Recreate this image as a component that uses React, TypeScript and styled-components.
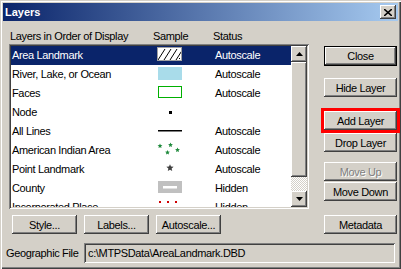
import React from "react";
import styled, { createGlobalStyle, css } from "styled-components";

const GlobalStyle = createGlobalStyle`
  html, body {
    margin: 0;
    padding: 0;
    background: #d4d0c8;
  }
  body {
    font-family: "Liberation Sans", Arial, sans-serif;
    font-size: 11px;
    letter-spacing: -0.35px;
    color: #000;
  }
`;

const raised = css`
  box-shadow: inset -1px -1px #404040, inset 1px 1px #ffffff,
    inset -2px -2px #808080, inset 2px 2px #d4d0c8;
`;

const sunken = css`
  box-shadow: inset 1px 1px #808080, inset -1px -1px #ffffff,
    inset 2px 2px #404040, inset -2px -2px #d4d0c8;
`;

const Window = styled.div`
  width: 401px;
  height: 269px;
  box-sizing: border-box;
  padding: 3px;
  background: #d4d0c8;
  display: flex;
  flex-direction: column;
  box-shadow: inset 1px 1px #d4d0c8, inset 2px 2px #ffffff,
    inset -1px -1px #404040, inset -2px -2px #808080;
`;

const TitleBar = styled.div`
  height: 18px;
  flex-shrink: 0;
  display: flex;
  align-items: center;
  justify-content: space-between;
  padding: 0 2px;
  background: linear-gradient(to right, #0a246a, #a6caf0);
  color: #fff;
  font-weight: bold;
  letter-spacing: 0;
`;

const CloseBox = styled.div`
  width: 16px;
  height: 14px;
  box-sizing: border-box;
  background: #d4d0c8;
  display: flex;
  align-items: center;
  justify-content: center;
  ${raised}
`;

const Main = styled.div`
  display: flex;
  padding-left: 6px;
`;

const LeftCol = styled.div`
  width: 300px;
  display: flex;
  flex-direction: column;
`;

const HeaderRow = styled.div`
  display: grid;
  grid-template-columns: 143px 60px 1fr;
  padding: 8px 0 0 1px;
  line-height: 15px;
  white-space: nowrap;
`;

const ListBox = styled.div`
  height: 165px;
  box-sizing: border-box;
  padding: 2px;
  background: #fff;
  display: flex;
  ${sunken}
`;

const Rows = styled.div`
  flex: 1;
  overflow: hidden;
  display: flex;
  flex-direction: column;
`;

const Row = styled.div<{ $selected?: boolean }>`
  flex-shrink: 0;
  height: 19px;
  line-height: 19px;
  display: grid;
  grid-template-columns: 145px 58px 1fr;
  padding-left: 1px;
  white-space: nowrap;
  background: ${(p) => (p.$selected ? "#0a246a" : "transparent")};
  color: ${(p) => (p.$selected ? "#fff" : "#000")};
`;

const Swatch = styled.svg`
  display: block;
`;

const ScrollBar = styled.div`
  width: 16px;
  display: flex;
  flex-direction: column;
`;

const ScrollButton = styled.div`
  height: 16px;
  flex-shrink: 0;
  background: #d4d0c8;
  display: flex;
  align-items: center;
  justify-content: center;
  ${raised}
`;

const Thumb = styled.div`
  height: 115px;
  flex-shrink: 0;
  background: #d4d0c8;
  ${raised}
`;

const Track = styled.div`
  flex: 1;
  background: repeating-conic-gradient(#ffffff 0 25%, #d4d0c8 0 50%) 0 0 / 2px 2px;
`;

const ButtonRow = styled.div`
  display: flex;
  gap: 7px;
  padding-left: 3px;
  margin-top: 6px;
`;

const Button = styled.button<{ $width?: number; $default?: boolean }>`
  width: ${(p) => p.$width ?? 73}px;
  height: ${(p) => (p.$default ? 20 : 19)}px;
  box-sizing: border-box;
  padding: 0;
  border: none;
  background: #d4d0c8;
  font: inherit;
  letter-spacing: inherit;
  color: #000;
  flex-shrink: 0;
  ${(p) =>
    p.$default
      ? css`
          box-shadow: inset 0 0 0 1px #000, inset -2px -2px #404040,
            inset 2px 2px #ffffff, inset -3px -3px #808080;
        `
      : raised}
  &:disabled {
    color: #808080;
    text-shadow: 1px 1px #ffffff;
  }
`;

const RightCol = styled.div`
  width: 73px;
  margin-left: 15px;
  padding-top: 25px;
  display: flex;
  flex-direction: column;
`;

const Gap = styled.div<{ $h: number }>`
  height: ${(p) => p.$h}px;
  flex-shrink: 0;
`;

const Highlight = styled.div`
  border: 3px solid #ff0000;
  margin: 0 -3px;
  display: flex;
`;

const FileRow = styled.div`
  display: flex;
  align-items: center;
  margin-top: 9px;
  padding-left: 3px;
`;

const FileLabel = styled.div`
  width: 78px;
  white-space: nowrap;
`;

const FileField = styled.div`
  width: 311px;
  height: 20px;
  box-sizing: border-box;
  padding-left: 4px;
  line-height: 20px;
  white-space: nowrap;
  ${sunken}
`;

type Kind =
  | "hatch"
  | "water"
  | "outline"
  | "node"
  | "line"
  | "greenStars"
  | "star"
  | "county"
  | "dots";

const starPath = (cx: number, cy: number, r: number) => {
  const pts: string[] = [];
  for (let i = 0; i < 10; i++) {
    const rad = i % 2 === 0 ? r : r * 0.45;
    const a = (Math.PI / 5) * i - Math.PI / 2;
    pts.push(`${(cx + rad * Math.cos(a)).toFixed(2)},${(cy + rad * Math.sin(a)).toFixed(2)}`);
  }
  return "M" + pts.join("L") + "Z";
};

const SampleIcon = ({ kind }: { kind: Kind }) => (
  <Swatch width="25" height="19" viewBox="0 0 25 19">
    {kind === "hatch" && (
      <g>
        <rect x="0.5" y="1.5" width="24" height="13" fill="#fff" stroke="#a0a0a0" />
        <clipPath id="hatchClip">
          <rect x="1" y="2" width="23" height="12" />
        </clipPath>
        <g clipPath="url(#hatchClip)" stroke="#000" strokeWidth="1">
          <line x1="1" y1="14" x2="8" y2="3" />
          <line x1="7" y1="14" x2="14" y2="3" />
          <line x1="13" y1="14" x2="20" y2="3" />
          <line x1="19" y1="14" x2="26" y2="3" />
        </g>
        <rect x="22" y="12" width="1" height="1" fill="#000" />
      </g>
    )}
    {kind === "water" && <rect x="1" y="2" width="24" height="13" fill="#a9dcea" />}
    {kind === "outline" && (
      <rect x="1.5" y="2.5" width="23" height="11" fill="#fff" stroke="#00b000" />
    )}
    {kind === "node" && <rect x="12" y="8" width="3" height="3" fill="#000" />}
    {kind === "line" && <rect x="1" y="8" width="24" height="1.5" fill="#000" />}
    {kind === "greenStars" && (
      <g fill="#1f8a3c">
        <path d={starPath(3, 5, 2.6)} />
        <path d={starPath(13.5, 4, 2.6)} />
        <path d={starPath(10.5, 11.5, 2.6)} />
        <path d={starPath(20.5, 9, 2.6)} />
      </g>
    )}
    {kind === "star" && <path d={starPath(13, 8, 3.8)} fill="#404040" />}
    {kind === "county" && (
      <g>
        <rect x="1" y="2" width="24" height="12" fill="#c0c0c0" />
        <rect x="6" y="7" width="14" height="2.5" fill="#fff" />
      </g>
    )}
    {kind === "dots" && (
      <g fill="#d00000">
        <rect x="2" y="3" width="2" height="2" />
        <rect x="10" y="3" width="2" height="2" />
        <rect x="18" y="3" width="2" height="2" />
        <rect x="2" y="9" width="2" height="2" />
        <rect x="9" y="9" width="2" height="2" />
        <rect x="16" y="9" width="2" height="2" />
        <rect x="23" y="9" width="2" height="2" />
      </g>
    )}
  </Swatch>
);

const layers: { name: string; kind: Kind; status: string }[] = [
  { name: "Area Landmark", kind: "hatch", status: "Autoscale" },
  { name: "River, Lake, or Ocean", kind: "water", status: "Autoscale" },
  { name: "Faces", kind: "outline", status: "Autoscale" },
  { name: "Node", kind: "node", status: "" },
  { name: "All Lines", kind: "line", status: "Autoscale" },
  { name: "American Indian Area", kind: "greenStars", status: "Autoscale" },
  { name: "Point Landmark", kind: "star", status: "Autoscale" },
  { name: "County", kind: "county", status: "Hidden" },
  { name: "Incorporated Place", kind: "dots", status: "Hidden" },
];

const Arrow = ({ up }: { up?: boolean }) => (
  <svg width="7" height="4" viewBox="0 0 7 4">
    <path d={up ? "M3.5 0L7 4H0Z" : "M0 0H7L3.5 4Z"} fill="#000" />
  </svg>
);

const App = (): JSX.Element => {
  return (
    <React.Fragment>
      <GlobalStyle />
      <Window>
        <TitleBar>
          <span>Layers</span>
          <CloseBox>
            <svg width="8" height="7" viewBox="0 0 8 7">
              <path d="M0 0L8 7M8 0L0 7" stroke="#000" strokeWidth="1.6" />
            </svg>
          </CloseBox>
        </TitleBar>
        <Main>
          <LeftCol>
            <HeaderRow>
              <span>Layers in Order of Display</span>
              <span>Sample</span>
              <span>Status</span>
            </HeaderRow>
            <ListBox>
              <Rows>
                {layers.map((layer, i) => (
                  <Row key={layer.name} $selected={i === 0}>
                    <span>{layer.name}</span>
                    <SampleIcon kind={layer.kind} />
                    <span>{layer.status}</span>
                  </Row>
                ))}
              </Rows>
              <ScrollBar>
                <ScrollButton>
                  <Arrow up />
                </ScrollButton>
                <Thumb />
                <Track />
                <ScrollButton>
                  <Arrow />
                </ScrollButton>
              </ScrollBar>
            </ListBox>
            <ButtonRow>
              <Button $width={65}>Style...</Button>
              <Button $width={65}>Labels...</Button>
              <Button $width={65}>Autoscale...</Button>
            </ButtonRow>
          </LeftCol>
          <RightCol>
            <Button $default>Close</Button>
            <Gap $h={12} />
            <Button>Hide Layer</Button>
            <Gap $h={11} />
            <Highlight>
              <Button>Add Layer</Button>
            </Highlight>
            <Button>Drop Layer</Button>
            <Gap $h={10} />
            <Button disabled>Move Up</Button>
            <Gap $h={1} />
            <Button>Move Down</Button>
            <Gap $h={14} />
            <Button>Metadata</Button>
          </RightCol>
        </Main>
        <FileRow>
          <FileLabel>Geographic File</FileLabel>
          <FileField>c:\MTPSData\AreaLandmark.DBD</FileField>
        </FileRow>
      </Window>
    </React.Fragment>
  );
};

export default App;
